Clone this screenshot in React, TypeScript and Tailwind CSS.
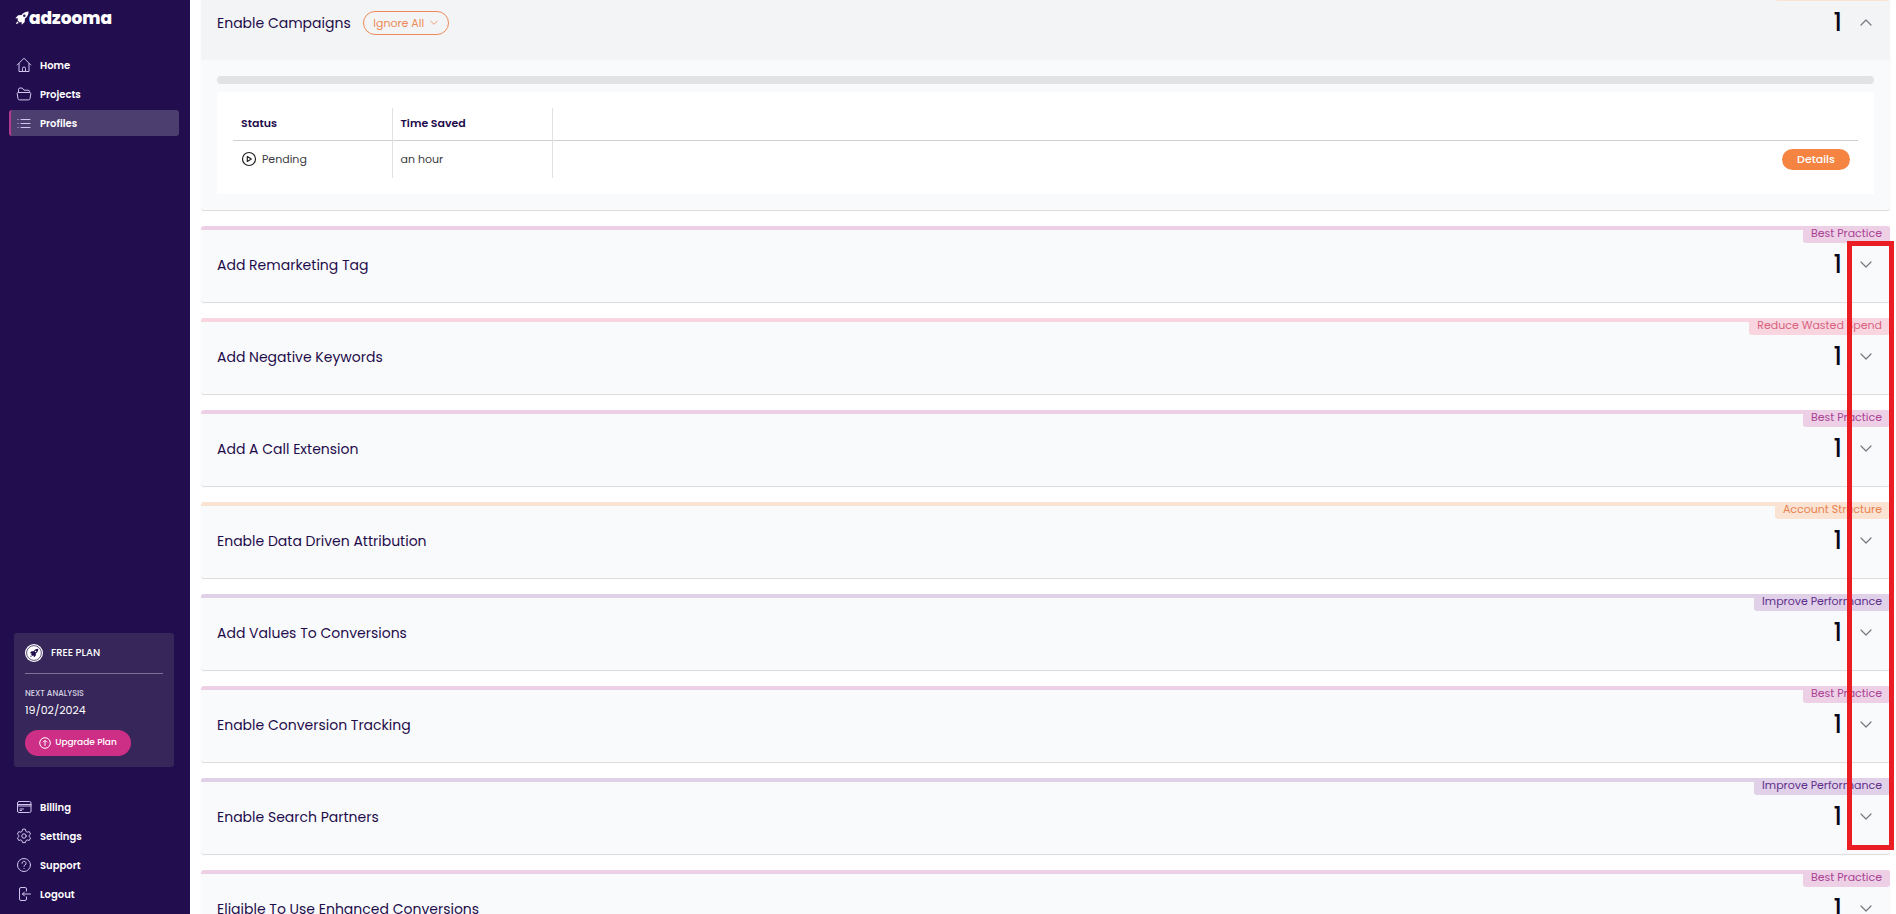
import { useState } from "react";
import type { ReactNode } from "react";
import clsx from "clsx";

type Category = "practice" | "wasted" | "structure" | "performance";

type Opportunity = {
    title: string;
    category: Category;
    count: number;
};

const categories: Record<Category, { label: string; bar: string; tag: string }> = {
    practice: {
        label: "Best Practice",
        bar: "border-[#eed0e6]",
        tag: "bg-[#eed0e6] text-[#a94394]",
    },
    wasted: {
        label: "Reduce Wasted Spend",
        bar: "border-[#f9d6df]",
        tag: "bg-[#f9d6df] text-[#d8617f]",
    },
    structure: {
        label: "Account Structure",
        bar: "border-[#fae3d2]",
        tag: "bg-[#fae3d2] text-[#e98250]",
    },
    performance: {
        label: "Improve Performance",
        bar: "border-[#e0d0e8]",
        tag: "bg-[#e0d0e8] text-[#5f2f8c]",
    },
};

const opportunities: Opportunity[] = [
    { title: "Enable Campaigns", category: "structure", count: 1 },
    { title: "Add Remarketing Tag", category: "practice", count: 1 },
    { title: "Add Negative Keywords", category: "wasted", count: 1 },
    { title: "Add A Call Extension", category: "practice", count: 1 },
    { title: "Enable Data Driven Attribution", category: "structure", count: 1 },
    { title: "Add Values To Conversions", category: "performance", count: 1 },
    { title: "Enable Conversion Tracking", category: "practice", count: 1 },
    { title: "Enable Search Partners", category: "performance", count: 1 },
    { title: "Eligible To Use Enhanced Conversions", category: "practice", count: 1 },
];

const NavIcon = ({ children }: { children: ReactNode }) => (
    <svg
        viewBox="0 0 16 16"
        className="h-4 w-4 shrink-0"
        fill="none"
        stroke="currentColor"
        strokeLinecap="round"
        strokeLinejoin="round"
        aria-hidden="true"
    >
        {children}
    </svg>
);

const mainLinks = [
    {
        label: "Home",
        icon: (
            <NavIcon>
                <path d="M1.200 8 8 1.200 14.800 8M3 6.500v8h3.500v-3a1.500 1.500 0 0 1 3 0v3H13v-8M6.500 14.500h3" />
            </NavIcon>
        ),
    },
    {
        label: "Projects",
        icon: (
            <NavIcon>
                <path d="M2.500 6.500V3.500A1.500 1.500 0 0 1 4 2h2.200L8 4.200h4a1.500 1.500 0 0 1 1.500 1.500v.8" />
                <path d="M2.300 6.500h11.400c.7 0 1.200.5 1.100 1.200l-.8 5c-.1.700-.7 1.200-1.400 1.200H3.400c-.7 0-1.300-.5-1.400-1.200l-.8-5c-.1-.7.400-1.200 1.100-1.200Z" />
            </NavIcon>
        ),
    },
    {
        label: "Profiles",
        icon: (
            <NavIcon>
                <path d="M5 4.500h9M5 8.500h9M5 12.500h9M2 4.500h.1M2 8.500h.1M2 12.500h.1" />
            </NavIcon>
        ),
    },
];

const accountLinks = [
    {
        label: "Billing",
        icon: (
            <NavIcon>
                <rect x="1.500" y="2.500" width="13.500" height="11" rx="1.500" />
                <path d="M1.500 5.500H15M1.500 7H15M4 11.500h1.500M4 10h3.500" />
            </NavIcon>
        ),
    },
    {
        label: "Settings",
        icon: (
            <NavIcon>
                <path d="m6.600 1.500-.5 1.900-1.300.8-2-.6-1.400 2.500 1.500 1.400v1.200L1.400 10l1.400 2.500 2-.6 1.300.8.5 1.900h2.800l.5-1.900 1.300-.8 2 .6 1.400-2.500-1.500-1.300V7.500l1.500-1.400-1.400-2.500-2 .6-1.300-.8-.5-1.900Z" />
                <circle cx="8" cy="8" r="2.200" />
            </NavIcon>
        ),
    },
    {
        label: "Support",
        icon: (
            <NavIcon>
                <circle cx="8" cy="8" r="6.500" />
                <path d="M6 6.300a2 2 0 1 1 3 1.700c-.7.400-1 .7-1 1.400M8 11.500h.1" />
            </NavIcon>
        ),
    },
    {
        label: "Logout",
        icon: (
            <NavIcon>
                <path d="M10.500 5V3A1.500 1.500 0 0 0 9 1.500H5A1.500 1.500 0 0 0 3.500 3v10A1.500 1.500 0 0 0 5 14.500h4a1.500 1.500 0 0 0 1.500-1.500v-2M14.500 8h-8M8.500 6l-2 2 2 2" />
            </NavIcon>
        ),
    },
];

const rocketBody =
    "M13.600.4C10.500.5 8.300 1.600 6.500 4.100L3.200 4.300.3 7.200l2.900.3-.7 1.800 2.300 2.300 1.700-.7.300 2.900 2.900-2.900.2-3.300c2.500-1.800 3.600-4.100 3.700-7.200ZM9.300 3.500a1.200 1.200 0 1 1 0 2.400 1.200 1.200 0 0 1 0-2.400Z";
const rocketFlame = "m2.200 10.300 1.600 1.600L.8 13.300Z";

const Rocket = () => (
    <svg viewBox="0 0 14 14" className="mt-[5px] h-[14px] w-[14px]" fill="currentColor" aria-hidden="true">
        <path fillRule="evenodd" d={rocketBody} />
        <path d={rocketFlame} />
    </svg>
);

const PlanBadge = () => (
    <svg viewBox="0 0 20 20" className="h-[18px] w-[18px]" aria-hidden="true">
        <circle cx="10" cy="10" r="10" fill="#ffffff" />
        <circle cx="10" cy="10" r="8.200" fill="none" stroke="#362659" strokeWidth="0.900" />
        <g transform="translate(5 5) scale(0.720)" fill="#220d4e">
            <path fillRule="evenodd" d={rocketBody} />
            <path d={rocketFlame} />
        </g>
    </svg>
);

const Chevron = ({ up = false, className }: { up?: boolean; className?: string }) => (
    <svg
        viewBox="0 0 12 12"
        className={className}
        fill="none"
        stroke="currentColor"
        strokeWidth="1.200"
        strokeLinecap="round"
        strokeLinejoin="round"
        aria-hidden="true"
    >
        <path d={up ? "m1 8 5-5 5 5" : "m1 3 5 5 5-5"} />
    </svg>
);

const NavList = ({ links, active }: { links: typeof mainLinks; active?: string }) => (
    <ul className="flex flex-col gap-[3px] pr-[11px] pl-[9px]">
        {links.map((link) => (
            <li key={link.label}>
                <a
                    href="#"
                    className={clsx(
                        "flex h-[26px] items-center gap-2 rounded-[3px] border-l-2 pl-[5px] text-[10px] font-semibold text-white",
                        link.label === active
                            ? "border-[#b23a8c] bg-[#4d3e70]"
                            : "border-transparent"
                    )}
                >
                    <span className="text-[#cfc6ee]">{link.icon}</span>
                    {link.label}
                </a>
            </li>
        ))}
    </ul>
);

const Sidebar = () => (
    <aside className="flex w-[190px] shrink-0 flex-col bg-[#220d4e] pb-[7px]">
        <a href="#" className="flex h-[52px] items-start pt-[6px] pl-[15px] text-white">
            <Rocket />
            <span className="text-[17px] leading-6 font-extrabold">adzooma</span>
        </a>

        <nav aria-label="Main">
            <NavList links={mainLinks} active="Profiles" />
        </nav>

        {/* Plan */}
        <div className="mt-auto mr-4 mb-[27px] ml-[14px] rounded-[3px] bg-[#362659] p-[11px] text-white">
            <div className="flex items-center gap-2 border-b border-[#7c7193] pb-[11px]">
                <PlanBadge />
                <span className="text-[10px] leading-[18px] font-medium">FREE PLAN</span>
            </div>
            <p className="mt-[14px] text-[8px] leading-3 font-medium text-[#d8d3e3]">NEXT ANALYSIS</p>
            <p className="mt-[2px] text-[11px] leading-4">19/02/2024</p>
            <button
                type="button"
                className="mt-3 flex h-[26px] w-[106px] items-center justify-center gap-1 rounded-full bg-[#cd2f86] text-[9px] font-medium"
            >
                <svg viewBox="0 0 12 12" className="h-3 w-3" fill="none" stroke="currentColor" aria-hidden="true">
                    <circle cx="6" cy="6" r="5.300" />
                    <path d="M6 8.800V3.500M4 5.300l2-2 2 2" />
                </svg>
                Upgrade Plan
            </button>
        </div>

        <nav aria-label="Account">
            <NavList links={accountLinks} />
        </nav>
    </aside>
);

const Details = () => (
    <div className="p-4">
        <div className="h-2 rounded-full bg-[#e3e3e3]" />
        <div className="mt-2 bg-white p-4">
            <table className="w-full border-collapse text-left text-[11px]">
                <thead>
                    <tr className="h-8 border-b border-[#cfcfd1] text-[#1f0d4b]">
                        <th className="w-[159px] border-r border-r-[#e1e1e3] px-2 pb-[2px] font-semibold">Status</th>
                        <th className="w-[160px] border-r border-r-[#e1e1e3] px-2 pb-[2px] font-semibold">Time Saved</th>
                        <th aria-label="Actions" />
                    </tr>
                </thead>
                <tbody>
                    <tr className="h-[38px] text-[#3c3c44]">
                        <td className="border-r border-[#e1e1e3] px-2">
                            <span className="flex items-center gap-[5px]">
                                <svg
                                    viewBox="0 0 16 16"
                                    className="h-4 w-4 text-[#222]"
                                    fill="none"
                                    stroke="currentColor"
                                    strokeWidth="1.200"
                                    strokeLinejoin="round"
                                    aria-hidden="true"
                                >
                                    <circle cx="8" cy="8" r="6.500" />
                                    <path d="M6.300 5.500v5l4-2.500Z" />
                                </svg>
                                Pending
                            </span>
                        </td>
                        <td className="border-r border-[#e1e1e3] px-2">an hour</td>
                        <td className="px-2 text-right">
                            <button
                                type="button"
                                className="h-[21px] w-[68px] rounded-full bg-[#f58442] text-[11px] font-medium text-white"
                            >
                                Details
                            </button>
                        </td>
                    </tr>
                </tbody>
            </table>
        </div>
    </div>
);

const OpportunityCard = ({ item, open, onToggle }: { item: Opportunity; open: boolean; onToggle: () => void }) => {
    const category = categories[item.category];

    return (
        <section className="relative rounded-[3px] bg-[#f9fafc] shadow-[0_1px_1px_rgba(0,0,0,0.14)]">
            <div
                className={clsx(
                    "flex h-[76px] items-center rounded-t-[3px] border-t-4 px-4 pb-[2px]",
                    category.bar,
                    open && "bg-[#f3f4f5]"
                )}
            >
                <h2 className="text-[14px] text-[#1f0d4b]">{item.title}</h2>
                {open && (
                    <button
                        type="button"
                        className="ml-3 flex h-6 w-[86px] items-center justify-center gap-[6px] rounded-full border border-[#ee8a58] text-[11px] text-[#ee8a58]"
                    >
                        Ignore All
                        <Chevron className="h-2 w-2" />
                    </button>
                )}
                <span className="ml-auto text-[24px] font-medium text-[#08081c]">{item.count}</span>
                <button
                    type="button"
                    onClick={onToggle}
                    aria-expanded={open}
                    aria-label={`Toggle ${item.title}`}
                    className="ml-4 p-[2px] text-[#77777f]"
                >
                    <Chevron up={open} className="h-3 w-3" />
                </button>
            </div>
            <span
                className={clsx(
                    "absolute top-0 right-0 h-[17px] rounded-[3px] px-2 text-[11px] leading-[15px]",
                    category.tag
                )}
            >
                {category.label}
            </span>
            {open && <Details />}
        </section>
    );
};

const App = () => {
    const [openTitle, setOpenTitle] = useState("Enable Campaigns");

    return (
        <div className="relative flex h-screen overflow-hidden bg-white font-['Poppins','Inter',sans-serif]">
            <Sidebar />
            <main className="min-w-0 flex-1 overflow-hidden pr-[6px] pl-[11px]">
                <div className="-mt-4 flex flex-col gap-4">
                    {opportunities.map((item) => (
                        <OpportunityCard
                            key={item.title}
                            item={item}
                            open={item.title === openTitle}
                            onToggle={() => setOpenTitle(item.title === openTitle ? "" : item.title)}
                        />
                    ))}
                </div>
            </main>

            {/* Highlight around the expand arrows */}
            <div className="pointer-events-none absolute top-[241px] right-[2px] h-[609px] w-[47px] border-[5px] border-[#ea1c24]" />
        </div>
    );
};

export default App;
